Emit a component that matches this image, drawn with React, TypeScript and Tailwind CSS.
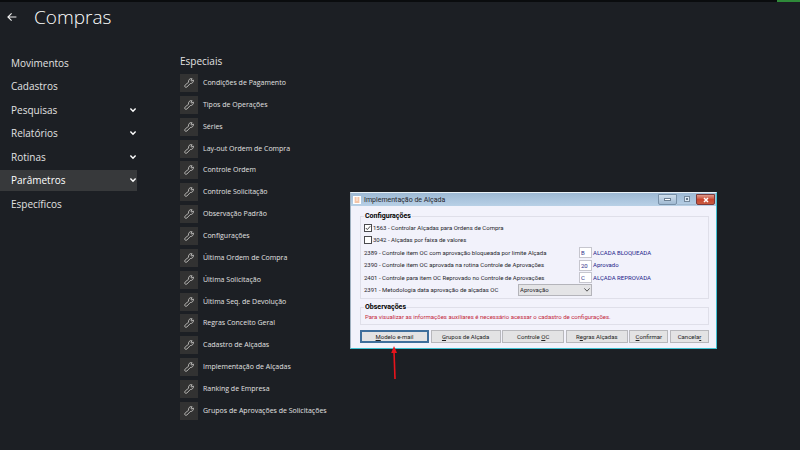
import clsx from 'clsx';
import { ReactNode } from 'react';

const menu = [
  { label: 'Movimentos' },
  { label: 'Cadastros' },
  { label: 'Pesquisas', children: true },
  { label: 'Relatórios', children: true },
  { label: 'Rotinas', children: true },
  { label: 'Parâmetros', children: true, active: true },
  { label: 'Específicos' },
];

const especiais = [
  'Condições de Pagamento',
  'Tipos de Operações',
  'Séries',
  'Lay-out Ordem de Compra',
  'Controle Ordem',
  'Controle Solicitação',
  'Observação Padrão',
  'Configurações',
  'Última Ordem de Compra',
  'Última Solicitação',
  'Última Seq. de Devolução',
  'Regras Conceito Geral',
  'Cadastro de Alçadas',
  'Implementação de Alçadas',
  'Ranking de Empresa',
  'Grupos de Aprovações de Solicitações',
];

const codigos = [
  { id: '2389', label: '2389 - Controle item OC com aprovação bloqueada por limite Alçada', code: 'B', text: 'ALCADA BLOQUEADA' },
  { id: '2390', label: '2390 - Controle item OC aprovada na rotina Controle de Aprovações', code: '20', text: 'Aprovado' },
  { id: '2401', label: '2401 - Controle para item OC Reprovado no Controle de Aprovações', code: 'C', text: 'ALÇADA REPROVADA' },
];

function Wrench() {
  return (
    <svg viewBox="0 0 12 12" className="size-3" fill="none" stroke="#d6d4d2" strokeWidth="0.8" strokeLinejoin="round" strokeLinecap="round">
      <path d="M5.5 4.9 C5.2 3 6.5 1.6 8.3 1.6 L9.2 1.8 L8 3.1 L8.3 3.9 L9.1 4.1 L10.3 2.9 C10.9 4.9 9.3 6.7 7.3 6.5 L3.9 10 C2.6 11.1 0.9 9.5 2 8.2 Z" />
    </svg>
  );
}

function Chevron({ className }: { className?: string }) {
  return (
    <svg viewBox="0 0 8 8" className={className} fill="none" stroke="currentColor">
      <path d="M1.4 2.4 L4 5.2 L6.6 2.4" />
    </svg>
  );
}

function Check({ id, label, checked }: { id: string; label: string; checked?: boolean }) {
  return (
    <div className="flex h-3 items-center">
      <span className="relative size-2">
        <input
          id={id}
          type="checkbox"
          defaultChecked={checked}
          className="peer block size-2 appearance-none border border-[#4a4a4e] bg-white"
        />
        <svg viewBox="0 0 8 8" className="pointer-events-none absolute inset-0 hidden size-2 peer-checked:block" fill="none" stroke="#333">
          <path d="M1.8 4 L3.3 5.6 L6.3 2.2" strokeWidth="0.9" />
        </svg>
      </span>
      <label htmlFor={id} className="ml-px">{label}</label>
    </div>
  );
}

function DialogButton({ className, children }: { className: string; children: ReactNode }) {
  return (
    <button
      type="button"
      className={clsx('h-[13px] whitespace-nowrap bg-[#e3e3e4] text-center leading-[10px] text-[#222]', className)}
    >
      {children}
    </button>
  );
}

function AlcadaDialog() {
  return (
    <section
      role="dialog"
      aria-labelledby="dialog-title"
      className="absolute left-[350px] top-[192px] w-[367px] border border-b-[#3fc0d0] border-l-[#9fb0bf] border-r-[#3fc0d0] border-t-[#e8f0f6] bg-[#f2f2fb] font-['Roboto',sans-serif] text-[6px] leading-[8px] text-[#26262c]"
    >
      <header className="flex h-[13px] items-center bg-linear-to-b from-[#9db9d4] to-[#b8d0e6] pl-[2px] pr-px">
        <span className="flex size-2 items-center justify-center bg-white">
          <svg viewBox="0 0 6 6" className="size-[6px]" fill="none" stroke="#e88a50">
            <path d="M0.6 1 H2.6 M3.4 1 H5.4 M0.6 3 H2.6 M3.4 3 H5.4 M0.6 5 H5.4" />
          </svg>
        </span>
        <h2 id="dialog-title" className="ml-[3px] flex-1 text-[7px]">Implementação de Alçada</h2>
        <button type="button" aria-label="Minimizar" className="flex h-[11px] w-[19px] items-center justify-center rounded-b-xs border border-[#7890a8] bg-linear-to-b from-[#cfdeec] to-[#9fb9d2]">
          <span className="h-[3px] w-[7px] border border-[#6c7f92] bg-white" />
        </button>
        <button type="button" aria-label="Maximizar" className="flex h-[11px] w-[19px] items-center justify-center border-b border-[#a3bad0]">
          <span className="flex size-[6px] items-center justify-center border border-[#74889c] bg-[#dce8f3]">
            <span className="size-[2px] bg-[#5f7388]" />
          </span>
        </button>
        <button type="button" aria-label="Fechar" className="flex h-[11px] w-[19px] items-center justify-center rounded-b-xs border border-[#7c3a3a] bg-linear-to-b from-[#dc9a8c] via-[#c8452f] to-[#c85a40]">
          <svg viewBox="0 0 6 6" className="size-[6px]" stroke="#fff" strokeWidth="1.5">
            <path d="M1 1 L5 5 M5 1 L1 5" />
          </svg>
        </button>
      </header>

      <div className="flex flex-col gap-1 pb-[5px] pl-[9px] pr-[7px] pt-[6px]">
        <fieldset className="border border-[#dfdfe9] px-[3px] pb-[2px]">
          <legend className="px-px text-[7px] font-bold text-black">Configurações</legend>
          <div className="flex h-[76px] flex-col justify-between pt-[2px]">
            <Check id="p1563" label="1563 - Controlar Alçadas para Ordens de Compra" checked />
            <Check id="p3042" label="3042 - Alçadas por faixa de valores" />
            {codigos.map((c) => (
              <div key={c.id} className="flex h-3 items-center whitespace-nowrap">
                <label htmlFor={c.id} className="w-[215px]">{c.label}</label>
                <input
                  id={c.id}
                  defaultValue={c.code}
                  className="h-[11px] w-[13px] border border-[#c6c6ce] bg-white pl-px text-[#34348c]"
                />
                <output htmlFor={c.id} className="ml-px text-[#22228a]">{c.text}</output>
              </div>
            ))}
            <div className="flex h-3 items-center">
              <label htmlFor="p2391" className="w-[154px]">2391 - Metodologia data aprovação de alçadas OC</label>
              <span className="relative">
                <select id="p2391" className="block h-3 w-[74px] appearance-none border border-[#b4b4ba] bg-[#e4e4e6] pl-px leading-[9px]">
                  <option>Aprovação</option>
                </select>
                <Chevron className="pointer-events-none absolute right-px top-[2px] size-2 text-[#555]" />
              </span>
            </div>
          </div>
        </fieldset>

        <fieldset className="border border-[#dfdfe9] px-[3px] pb-[3px] pt-[2px]">
          <legend className="px-px text-[7px] font-bold text-black">Observações</legend>
          <p className="px-px text-[#c4283c]">
            Para visualizar as informações auxiliares é necessário acessar o cadastro de configurações.
          </p>
        </fieldset>

        <div className="mt-px flex justify-between">
          <DialogButton className="w-[69px] border-2 border-[#3f6f9c]"><u>M</u>odelo e-mail</DialogButton>
          <DialogButton className="w-[70px] border border-[#b8b8bc]"><u>G</u>rupos de Alçada</DialogButton>
          <DialogButton className="w-[62px] border border-[#b8b8bc]">Controle <u>O</u>C</DialogButton>
          <DialogButton className="w-[62px] border border-[#b8b8bc]">R<u>e</u>gras Alçadas</DialogButton>
          <DialogButton className="w-[39px] border border-[#b8b8bc]"><u>C</u>onfirmar</DialogButton>
          <DialogButton className="w-[39px] border border-[#b8b8bc]">Cancela<u>r</u></DialogButton>
        </div>
      </div>
    </section>
  );
}

export default function App() {
  return (
    <div className="relative min-h-screen overflow-hidden bg-[#1c1f24] font-['Open_Sans',sans-serif] text-[#e2e2e2]">
      <div className="flex h-[2px] justify-end bg-[#0a0c0e]">
        <div className="w-[23px] bg-[#2f8a3a]" />
      </div>

      <header className="flex h-[30px] items-center pl-[7px]">
        <button type="button" aria-label="Voltar" className="w-[27px]">
          <svg viewBox="0 0 10 10" className="size-[10px]" fill="none" stroke="#f0f0f0" strokeWidth="1.1">
            <path d="M9.4 5 H1 M4.6 1.3 L0.9 5 L4.6 8.7" />
          </svg>
        </button>
        <h1 className="text-[19px] font-light leading-6 text-white">Compras</h1>
      </header>

      <div className="flex pt-5">
        <nav className="flex h-[162px] w-[137px] flex-col justify-between">
          {menu.map((item) => (
            <a
              key={item.label}
              href="#"
              className={clsx('flex h-[21px] items-center justify-between pl-[11px] text-[10px] leading-4', item.active && 'bg-[#37393b] text-white')}
            >
              {item.label}
              {item.children && <Chevron className="size-2 stroke-[1.4] text-white" />}
            </a>
          ))}
        </nav>

        <main className="pl-[43px]">
          <h2 className="h-[22px] text-[10px] leading-[18px]">Especiais</h2>
          <ul className="flex h-[346px] flex-col justify-between">
            {especiais.map((label) => (
              <li key={label}>
                <a href="#" className="flex items-center gap-[5px] text-[7px] leading-[10px]">
                  <span className="flex size-[18px] items-center justify-center bg-[#323232]">
                    <Wrench />
                  </span>
                  {label}
                </a>
              </li>
            ))}
          </ul>
        </main>
      </div>

      <AlcadaDialog />

      {/* Points at the "Modelo e-mail" button */}
      <svg viewBox="0 0 8 34" className="absolute left-[390px] top-[346px] h-[34px] w-2">
        <path d="M4 5 L5 33" stroke="#e8141c" strokeWidth="1.6" />
        <path d="M4 0 L7 7 H1.2 Z" fill="#e8141c" />
      </svg>
    </div>
  );
}
